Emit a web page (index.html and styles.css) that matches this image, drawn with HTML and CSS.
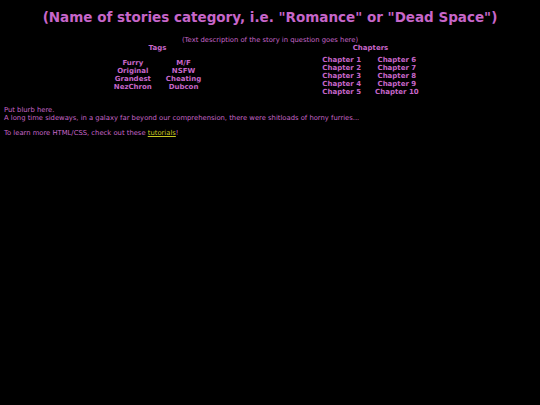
FILE: index.html
```html
<!DOCTYPE html>
<html>
<head>
<meta charset="utf-8">
<link rel="stylesheet" href="styles.css">
</head>
<body>
<h1 class="title">(Name of stories category, i.e. "Romance" or "Dead Space")</h1>
<p class="desc">(Text description of the story in question goes here)</p>
<div class="info">
  <div class="col">
    <div class="col-head">Tags</div>
    <div class="col-body">
      <div class="list two">
        <span>Furry</span><span>M/F</span>
        <span>Original</span><span>NSFW</span>
        <span>Grandest</span><span>Cheating</span>
        <span>NezChron</span><span>Dubcon</span>
      </div>
    </div>
  </div>
  <div class="col">
    <div class="col-head">Chapters</div>
    <div class="col-body">
      <div class="list chapters">
        <span>Chapter 1</span><span>Chapter 6</span>
        <span>Chapter 2</span><span>Chapter 7</span>
        <span>Chapter 3</span><span>Chapter 8</span>
        <span>Chapter 4</span><span>Chapter 9</span>
        <span>Chapter 5</span><span>Chapter 10</span>
      </div>
    </div>
  </div>
</div>
<div class="blurb">
  <p>Put blurb here.<br>A long time sideways, in a galaxy far beyond our comprehension, there were shitloads of horny furries...</p>
  <p>To learn more HTML/CSS, check out these <a class="link" href="#">tutorials</a>!</p>
</div>
</body>
</html>
```
FILE: styles.css
```css
html, body {
  background: #000;
}
body {
  margin: 0;
  padding: 0 4px;
  color: #c766c9;
  font-family: "DejaVu Sans", Verdana, sans-serif;
  font-size: 6.8px;
  line-height: 8px;
}
.title {
  margin: 0;
  padding-top: 10px;
  text-align: center;
  font-size: 13.5px;
  line-height: 15px;
  font-weight: bold;
}
.desc {
  margin: 11px 0 0;
  text-align: center;
}
.info {
  display: flex;
  justify-content: center;
  padding-right: 12px;
  font-weight: bold;
  font-size: 7px;
}
.col {
  width: 213px;
  display: flex;
  flex-direction: column;
  align-items: center;
}
.col-head {
  height: 8px;
}
.col-body {
  flex: 1;
  display: flex;
  align-items: center;
  padding-top: 4px;
}
.list {
  display: grid;
  grid-template-columns: auto auto;
  column-gap: 14px;
  justify-items: center;
}
.list.two {
  margin-top: -2px;
}
.blurb {
  margin-top: 10px;
}
.blurb p {
  margin: 0 0 7px;
}
.link {
  color: #c8c820;
}
```
